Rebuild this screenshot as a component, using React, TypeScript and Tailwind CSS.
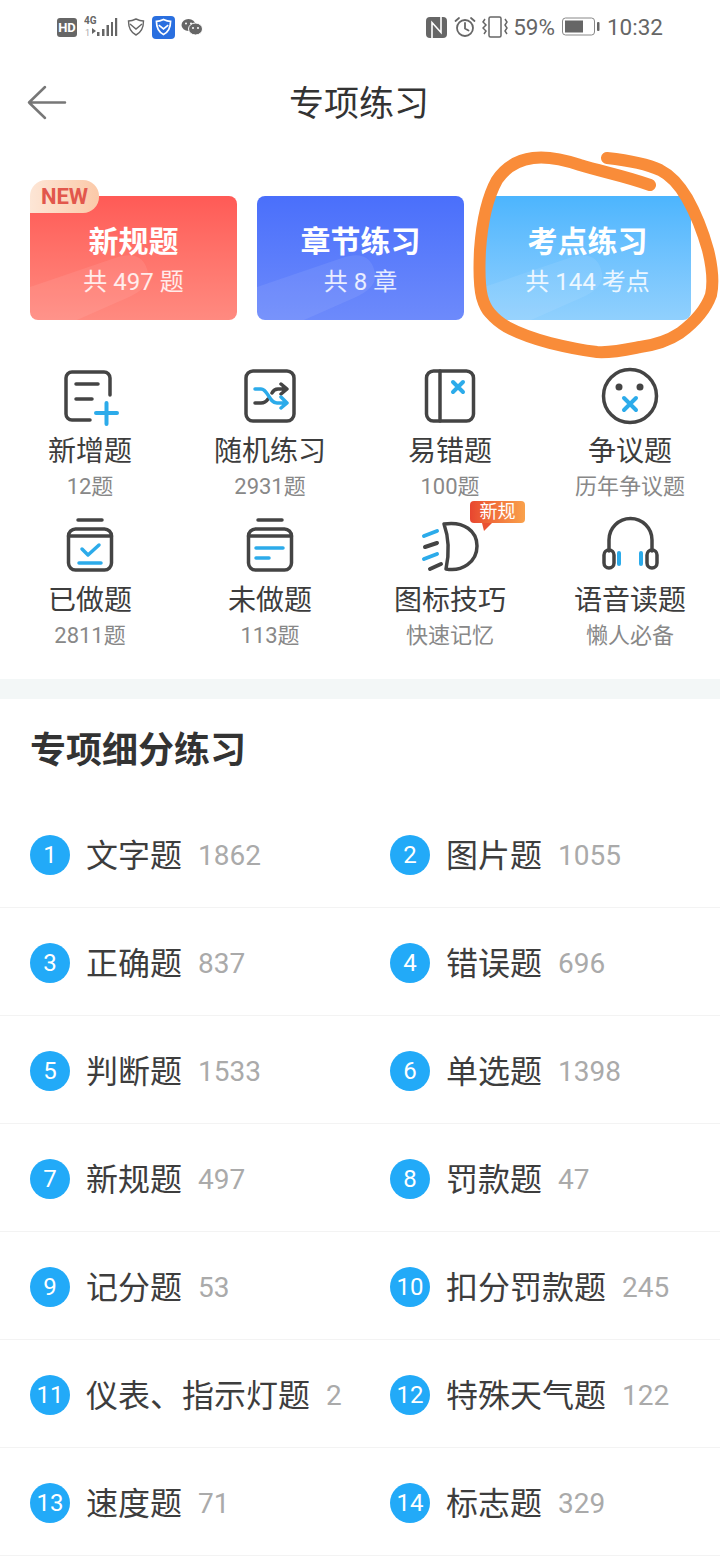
const DARK = '#444444';
const BLUE = '#2cabea';

// Icons for the shortcut grid
const IconNew = () => (
  <svg width="64" height="64" viewBox="0 0 64 64" fill="none" strokeWidth="3.5" strokeLinecap="round">
    <path d="M52 31V14a6 6 0 0 0-6-6H14a6 6 0 0 0-6 6v36a6 6 0 0 0 6 6h18" stroke={DARK} />
    <path d="M18 20h22M18 35h16" stroke={DARK} />
    <path d="M38 49h21M48.500 39v21" stroke={BLUE} strokeWidth="4" />
  </svg>
);

const IconShuffle = () => (
  <svg width="64" height="64" viewBox="0 0 64 64" fill="none" strokeWidth="3.500" strokeLinecap="round" strokeLinejoin="round">
    <rect x="8" y="7" width="48" height="50" rx="7" stroke={DARK} />
    <path d="M17 39h6c3 0 5-1 7-4M34 29c1-2 3-4 6-4h8M43 20l6 5-6 5" stroke={DARK} />
    <path d="M17 25h6c7 0 8 14 16 14h9M43 33l6 6-6 5" stroke={BLUE} />
  </svg>
);

const IconBook = () => (
  <svg width="64" height="64" viewBox="0 0 64 64" fill="none" strokeWidth="3.500" strokeLinecap="round">
    <rect x="8.500" y="7" width="47" height="50" rx="7" stroke={DARK} />
    <path d="M22 7v50" stroke={DARK} />
    <path d="M35 18l10 10M45 18L35 28" stroke={BLUE} strokeWidth="4" />
  </svg>
);

const IconFace = () => (
  <svg width="64" height="64" viewBox="0 0 64 64" fill="none" strokeWidth="3.500" strokeLinecap="round">
    <circle cx="32" cy="32" r="26.500" stroke={DARK} />
    <circle cx="21" cy="23" r="3.500" fill={DARK} />
    <circle cx="42" cy="23" r="3.500" fill={DARK} />
    <path d="M26 34l12 12M38 34L26 46" stroke={BLUE} strokeWidth="4" />
  </svg>
);

const IconDone = () => (
  <svg width="64" height="64" viewBox="0 0 64 64" fill="none" strokeWidth="3.500" strokeLinecap="round" strokeLinejoin="round">
    <path d="M20 7h24" stroke={DARK} />
    <rect x="10.500" y="16" width="43" height="41" rx="7" stroke={DARK} />
    <path d="M10.500 23h43" stroke={DARK} />
    <path d="M24 36l6 6 11-10M21 50h22" stroke={BLUE} />
  </svg>
);

const IconTodo = () => (
  <svg width="64" height="64" viewBox="0 0 64 64" fill="none" strokeWidth="3.500" strokeLinecap="round" strokeLinejoin="round">
    <path d="M20 7h24" stroke={DARK} />
    <rect x="10.500" y="16" width="43" height="41" rx="7" stroke={DARK} />
    <path d="M10.500 23h43" stroke={DARK} />
    <path d="M18 35h27M18 45h13" stroke={BLUE} />
  </svg>
);

const IconLamp = () => (
  <svg width="64" height="64" viewBox="0 0 64 64" fill="none" strokeWidth="3.500" strokeLinecap="round" strokeLinejoin="round">
    <path d="M26 11C46 8 59 18 59 33c0 16-15 26-31 23 3-14 3-31-2-45z" stroke={DARK} />
    <path d="M6 23l13-5M6 46l13-5" stroke={BLUE} strokeWidth="4" />
    <path d="M7 34l12-4M12 56l11-5" stroke={DARK} strokeWidth="4" />
  </svg>
);

const IconHeadset = () => (
  <svg width="64" height="64" viewBox="0 0 64 64" fill="none" strokeWidth="3.500" strokeLinecap="round">
    <path d="M11 38V27a21.500 21.500 0 0 1 43 0v11" stroke={DARK} />
    <rect x="6" y="37" width="10" height="18" rx="5" stroke={DARK} />
    <rect x="49" y="37" width="10" height="18" rx="5" stroke={DARK} />
    <path d="M21 40v11M43 40v11" stroke={BLUE} strokeWidth="4" />
  </svg>
);

// Status bar pieces
const StatusLeft = () => (
  <div className="flex items-center">
    <div className="flex h-[19px] w-5 items-center justify-center rounded-[3px] bg-[#666666] text-[13px] leading-none font-bold text-white">HD</div>
    <svg width="34" height="24" viewBox="0 0 34 24" className="ml-[7px]">
      <text x="0" y="9" fontSize="10" fontWeight="700" fill="#666666">4G</text>
      <text x="1" y="21" fontSize="9" fill="#aaaaaa">1</text>
      <path d="M8 13l4 3-4 3z" fill="#666666" />
      <path d="M13 17h2.500v4H13zM18 14h2.500v7H18zM22.500 10H25v11h-2.500zM27 7h2v14h-2zM31 3h2.200v18H31z" fill="#666666" />
    </svg>
    <svg width="18" height="18" viewBox="0 0 18 18" fill="none" stroke="#666666" strokeWidth="1.400" className="ml-[9px]">
      <path d="M9 1c3 1.500 5 2 7.500 2 0 6-1.500 11-7.500 14C3 14 1.500 9 1.500 3 4 3 6 2.500 9 1z" />
      <path d="M3 6l6 5 6-5" />
    </svg>
    <div className="ml-[7px] flex h-[23px] w-[23px] items-center justify-center rounded-[4px] bg-[#2a6fdf]">
      <svg width="17" height="18" viewBox="0 0 18 18" fill="none" stroke="#ffffff" strokeWidth="1.800">
        <path d="M9 1c3 1.500 5 2 7.500 2 0 6-1.500 11-7.500 14C3 14 1.500 9 1.500 3 4 3 6 2.500 9 1z" />
        <path d="M4 7l5 4 5-4" />
      </svg>
    </div>
    <svg width="22" height="18" viewBox="0 0 22 18" className="ml-[6px]">
      <ellipse cx="7.500" cy="7" rx="7" ry="6" fill="#666666" />
      <circle cx="5" cy="5.500" r="1" fill="#ffffff" />
      <circle cx="10" cy="5.500" r="1" fill="#ffffff" />
      <ellipse cx="14.500" cy="11" rx="7" ry="6" fill="#666666" stroke="#ffffff" strokeWidth="1" />
      <circle cx="12" cy="10" r="1" fill="#ffffff" />
      <circle cx="17" cy="10" r="1" fill="#ffffff" />
    </svg>
  </div>
);

const StatusRight = () => (
  <div className="flex items-center text-[#666666]">
    <svg width="21" height="21" viewBox="0 0 21 21">
      <rect x="0" y="0" width="21" height="21" rx="4" fill="#666666" />
      <path d="M6 21V5.500l9 10V0" fill="none" stroke="#ffffff" strokeWidth="1.600" />
    </svg>
    <svg width="22" height="22" viewBox="0 0 22 22" fill="none" stroke="#666666" strokeWidth="1.800" strokeLinecap="round" className="ml-[7px]">
      <circle cx="11" cy="12" r="8" />
      <path d="M11 7v5.500l3.500 2M1.500 5L5 2M20.500 5L17 2" />
    </svg>
    <svg width="26" height="22" viewBox="0 0 26 22" fill="none" stroke="#666666" strokeWidth="1.500" className="ml-[6px]">
      <rect x="7" y="1" width="12" height="20" rx="1.500" />
      <path d="M3 3L1 6l3 3-3 3 3 3-2 3M23 3l2 3-2 3 2 3-2 3 2 3" />
    </svg>
    <span className="ml-[5px] text-[22.500px] leading-none">59%</span>
    <svg width="40" height="20" viewBox="0 0 40 20" className="ml-[7px]">
      <rect x="0.500" y="1" width="32" height="17" rx="3" fill="none" stroke="#888888" />
      <rect x="3" y="3.500" width="18" height="12" fill="#666666" />
      <rect x="35" y="5" width="2.500" height="9" rx="1" fill="#666666" />
    </svg>
    <span className="ml-[5px] text-[22.500px] leading-none">10:32</span>
  </div>
);

const Blob = () => (
  <svg width="207" height="124" viewBox="0 0 207 124" className="absolute top-0 left-0">
    <path d="M0 91L85 62c20-7 30 0 33 15 2 12-8 20-28 28l-43 19H0z" fill="#ffffff" fillOpacity="0.08" />
  </svg>
);

const cards = [
  { title: '新规题', sub: '共 497 题', bg: 'bg-gradient-to-b from-[#ff5a56] to-[#ff8a80]', isNew: true },
  { title: '章节练习', sub: '共 8 章', bg: 'bg-gradient-to-b from-[#4a6ffb] to-[#6d8afb]', isNew: false },
  { title: '考点练习', sub: '共 144 考点', bg: 'bg-gradient-to-b from-[#4cb5fe] to-[#90d0fd]', isNew: false },
];

const shortcuts = [
  { icon: <IconNew />, label: '新增题', sub: '12题' },
  { icon: <IconShuffle />, label: '随机练习', sub: '2931题' },
  { icon: <IconBook />, label: '易错题', sub: '100题' },
  { icon: <IconFace />, label: '争议题', sub: '历年争议题' },
  { icon: <IconDone />, label: '已做题', sub: '2811题' },
  { icon: <IconTodo />, label: '未做题', sub: '113题' },
  { icon: <IconLamp />, label: '图标技巧', sub: '快速记忆', badge: true },
  { icon: <IconHeadset />, label: '语音读题', sub: '懒人必备' },
];

const topics = [
  ['文字题', '1862'],
  ['图片题', '1055'],
  ['正确题', '837'],
  ['错误题', '696'],
  ['判断题', '1533'],
  ['单选题', '1398'],
  ['新规题', '497'],
  ['罚款题', '47'],
  ['记分题', '53'],
  ['扣分罚款题', '245'],
  ['仪表、指示灯题', '2'],
  ['特殊天气题', '122'],
  ['速度题', '71'],
  ['标志题', '329'],
];

const App = () => {
  return (
    <div className="relative h-[1560px] w-[720px] overflow-hidden bg-white font-['Roboto','Noto_Sans_CJK_SC',sans-serif]">
      {/* Status bar */}
      <div className="flex h-[54px] items-center justify-between pr-[57px] pl-[57px]">
        <StatusLeft />
        <StatusRight />
      </div>

      {/* Nav */}
      <div className="grid h-[98px] grid-cols-[1fr_auto_1fr] items-center pr-[29px] pl-[27px]">
        <svg width="40" height="36" viewBox="0 0 40 36" fill="none" stroke="#777777" strokeWidth="2.500" strokeLinecap="round" strokeLinejoin="round">
          <path d="M38 17.500H2M18 2L2 17.500 18 33" />
        </svg>
        <div className="pt-[3px] text-[35px] leading-none text-[#333333]">专项练习</div>
        <div />
      </div>

      {/* Top cards */}
      <div className="flex gap-5 pt-[44px] pl-[30px]">
        {cards.map((card) => (
          <div key={card.title} className={`relative h-[124px] w-[207px] rounded-lg text-center text-white ${card.bg}`}>
            <Blob />
            <div className="relative pt-[26px]">
              <div className="text-[30px] leading-10 font-bold">{card.title}</div>
              <div className="text-[24px] leading-10 text-white/85">{card.sub}</div>
            </div>
            {card.isNew && (
              <div className="absolute top-[-16px] left-0 flex h-[33px] w-[69px] items-center justify-center rounded-tl-2xl rounded-tr-2xl rounded-br-2xl bg-gradient-to-r from-[#fde6d6] to-[#fbc9a8] text-[22px] font-bold text-[#e2574c]">
                NEW
              </div>
            )}
          </div>
        ))}
      </div>

      {/* Shortcut grid */}
      <div className="grid grid-cols-4 gap-y-[15px] pt-[44px] pb-[32px]">
        {shortcuts.map((item) => (
          <div key={item.label} className="relative flex flex-col items-center">
            {item.icon}
            <div className="text-[28px] leading-[48px] text-[#3d3d3d]">{item.label}</div>
            <div className="text-[22px] leading-[22px] text-[#888888]">{item.sub}</div>
            {item.badge && (
              <div className="absolute top-[-12px] left-[110px]">
                <div className="flex h-[22px] w-[55px] items-center justify-center rounded-[4px] bg-gradient-to-r from-[#e8452f] to-[#f9a14b] text-[18px] leading-none text-white">
                  新规
                </div>
                <svg width="10" height="8" viewBox="0 0 10 8" className="ml-3">
                  <path d="M0 0h10L2 8z" fill="#ea5233" />
                </svg>
              </div>
            )}
          </div>
        ))}
      </div>

      <div className="h-5 bg-[#f3f7f7]" />

      {/* Topic list */}
      <div className="flex h-[101px] items-center pt-[2px] pl-[30px] text-[36px] font-bold text-[#333333]">专项细分练习</div>
      <div className="grid grid-cols-2">
        {topics.map(([label, count], i) => (
          <div key={label + i} className="flex h-[108px] items-center border-b border-[#f3f3f3] pt-[2px] pl-[30px]">
            <div className="flex h-10 w-10 shrink-0 items-center justify-center rounded-full bg-[#22aaf8] text-[24px] leading-none text-white">
              {i + 1}
            </div>
            <div className="ml-4 pt-[3px] text-[32px] leading-none whitespace-nowrap text-[#3d3d3d]">{label}</div>
            <div className="ml-4 pt-[3px] text-[28px] leading-none text-[#aaaaaa]">{count}</div>
          </div>
        ))}
      </div>

      {/* Hand-drawn highlight over the third card */}
      <svg width="720" height="400" viewBox="0 0 720 400" fill="none" className="absolute top-0 left-0">
        <path
          d="M650 185C625 176 603 172 580 165 562 159 548 156 533 158 518 160 505 168 497 180 487 198 482 222 480 250 479 270 479 285 482 297 484 304 486 309 490 313 495 319 500 323 507 327 520 334 535 339 550 343 566 347 580 350 597 352 612 353 625 350 640 347 655 345 668 341 680 333 695 322 706 309 711 295 714 281 712 266 708 250 703 232 696 214 687 198 680 186 672 176 660 170 645 163 625 160 607 158"
          stroke="#f98c39"
          strokeWidth="12"
          strokeLinecap="round"
          strokeLinejoin="round"
        />
      </svg>
    </div>
  );
};

export default App;
